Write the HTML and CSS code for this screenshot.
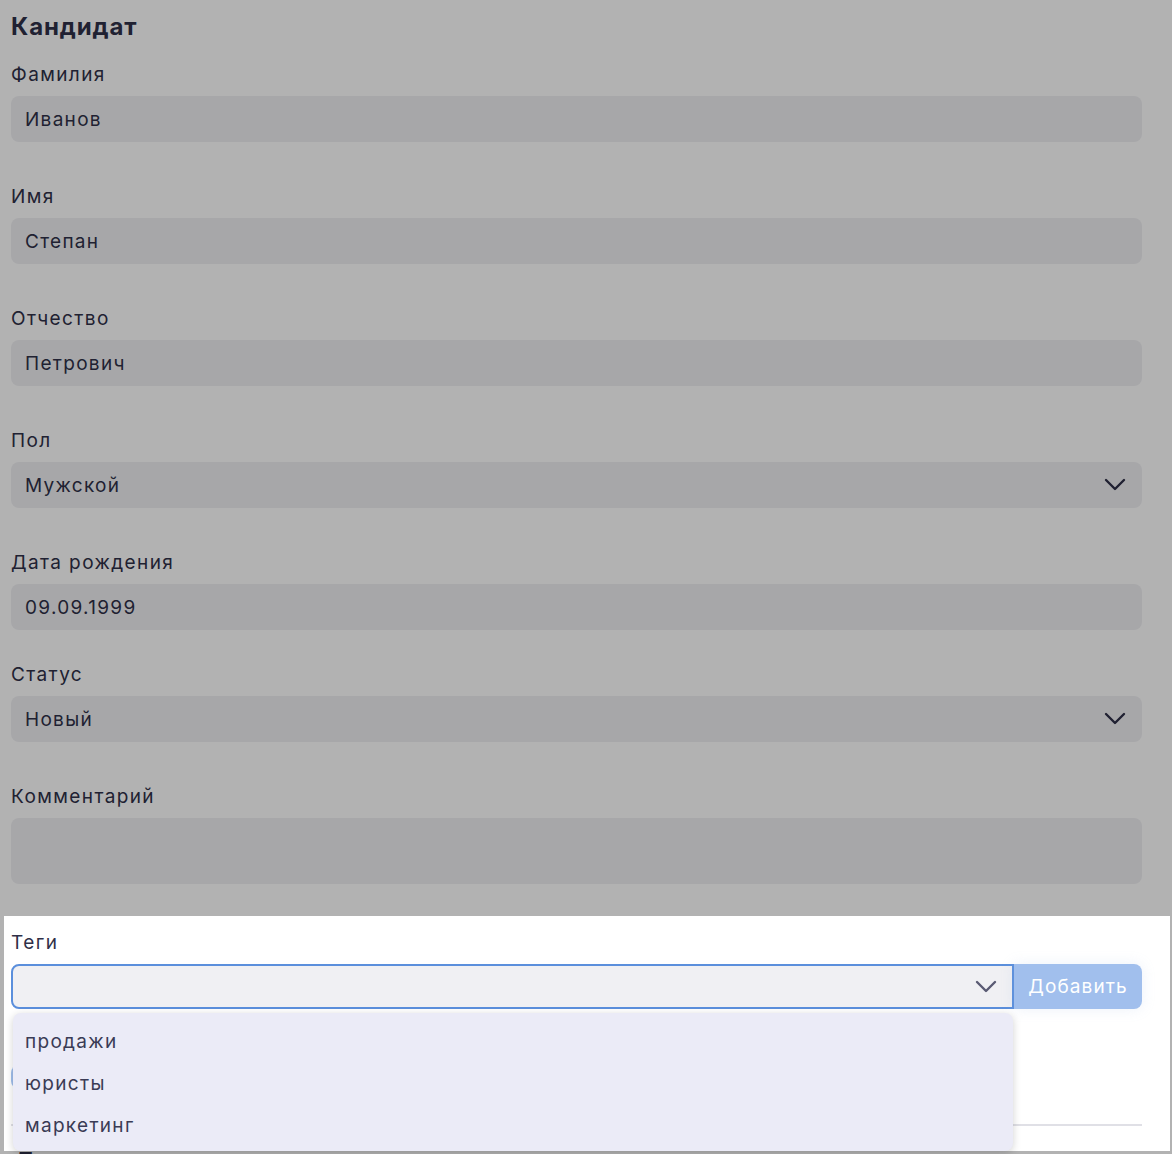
FILE: index.html
```html
<!DOCTYPE html>
<html lang="ru">
<head>
<meta charset="utf-8">
<title>Кандидат</title>
<link rel="stylesheet" href="styles.css">
</head>
<body>
<div class="page">
  <h2 class="title">Кандидат</h2>

  <div class="field">
    <label class="label">Фамилия</label>
    <div class="input">Иванов</div>
  </div>
  <div class="field">
    <label class="label">Имя</label>
    <div class="input">Степан</div>
  </div>
  <div class="field">
    <label class="label">Отчество</label>
    <div class="input">Петрович</div>
  </div>
  <div class="field">
    <label class="label">Пол</label>
    <div class="input select">Мужской
      <svg class="chev" width="22" height="14" viewBox="0 0 22 14"><path d="M2 2 L11 11 L20 2" fill="none" stroke="#2f3048" stroke-width="2.4" stroke-linecap="round" stroke-linejoin="round"/></svg>
    </div>
  </div>
  <div class="field field-tight">
    <label class="label">Дата рождения</label>
    <div class="input">09.09.1999</div>
  </div>
  <div class="field">
    <label class="label">Статус</label>
    <div class="input select">Новый
      <svg class="chev" width="22" height="14" viewBox="0 0 22 14"><path d="M2 2 L11 11 L20 2" fill="none" stroke="#2f3048" stroke-width="2.4" stroke-linecap="round" stroke-linejoin="round"/></svg>
    </div>
  </div>
  <div class="field field-wide">
    <label class="label">Комментарий</label>
    <div class="input textarea"></div>
  </div>

  <div class="field tags">
    <div class="spotlight"></div>
    <label class="label">Теги</label>
    <div class="tag-row">
      <div class="tag-select">
        <svg class="chev" width="22" height="14" viewBox="0 0 22 14"><path d="M2 2 L11 11 L20 2" fill="none" stroke="#5a5b73" stroke-width="2.4" stroke-linecap="round" stroke-linejoin="round"/></svg>
      </div>
      <button class="add-btn">Добавить</button>
    </div>
    <div class="chips"><span class="chip"></span></div>
    <div class="divider"></div>
    <h3 class="next-title">Документы</h3>
    <ul class="menu">
      <li>продажи</li>
      <li>юристы</li>
      <li>маркетинг</li>
    </ul>
  </div>
</div>
</body>
</html>
```
FILE: styles.css
```css
* { box-sizing: border-box; }
html, body { margin: 0; padding: 0; }
body {
  background: #ffffff;
  font-family: Inter, "Noto Sans", sans-serif;
  color: #2f3048;
  overflow: hidden;
  height: 1154px;
}
.page {
  width: 1142px;
  padding-left: 11px;
  position: relative;
}
.title {
  margin: 0;
  padding-top: 12px;
  font-size: 24px;
  line-height: 30px;
  font-weight: 700;
  letter-spacing: 0.9px;
  color: #2f3048;
}
.field {
  margin-top: 21px;
  display: flex;
  flex-direction: column;
}
.field + .field { margin-top: 43px; }
.field-tight + .field { margin-top: 33px; }
.field-wide + .field { margin-top: 47px; }
.label {
  font-size: 19px;
  line-height: 24px;
  letter-spacing: 1.4px;
  margin-bottom: 9px;
  color: #2f3048;
}
.input {
  height: 46px;
  border-radius: 8px;
  background: #f0f0f3;
  padding: 0 14px;
  display: flex;
  align-items: center;
  font-size: 19px;
  letter-spacing: 1.3px;
  color: #2f3048;
}
.select { justify-content: space-between; padding-right: 16px; }
.textarea { height: 66px; }

.tags { position: relative; }
.spotlight {
  position: absolute;
  left: -7px;
  top: -15px;
  width: 1166px;
  height: 235px;
  background: transparent;
  box-shadow: 0 0 0 3000px rgba(0, 0, 0, 0.3);
  pointer-events: none;
  z-index: 5;
}
.tag-row {
  display: flex;
  height: 45px;
}
.tag-select {
  flex: 1;
  background: #f0f0f3;
  border: 2px solid #5b8fdc;
  border-radius: 8px 0 0 8px;
  display: flex;
  align-items: center;
  justify-content: flex-end;
  padding-right: 15px;
}
.add-btn {
  width: 128px;
  border: none;
  border-radius: 0 8px 8px 0;
  background: #a1bfed;
  color: #ffffff;
  font-family: Inter, "Noto Sans", sans-serif;
  font-size: 19px;
  letter-spacing: 1.1px;
  padding: 0;
  box-shadow: 0 0 14px rgba(150, 180, 230, 0.18);
}
.chips {
  margin-top: 56px;
  display: flex;
}
.chip {
  display: block;
  background: #a1bfed;
  border-radius: 8px;
  height: 24px;
  width: 90px;
}
.divider {
  margin-top: 35px;
  height: 2px;
  background: #e0e0e6;
}
.next-title {
  margin: 21px 0 0 3px;
  font-size: 24px;
  line-height: 30px;
  font-weight: 700;
}
.menu {
  position: absolute;
  left: 2px;
  top: 82px;
  width: 1000px;
  margin: 0;
  padding: 8px 0 4px;
  list-style: none;
  background: #ebebf7;
  border-radius: 8px;
  box-shadow: 0 2px 8px rgba(0, 0, 0, 0.18);
  z-index: 6;
}
.menu li {
  height: 42px;
  line-height: 42px;
  padding-left: 12px;
  font-size: 19px;
  letter-spacing: 1.3px;
  color: #3a3b55;
}
```
